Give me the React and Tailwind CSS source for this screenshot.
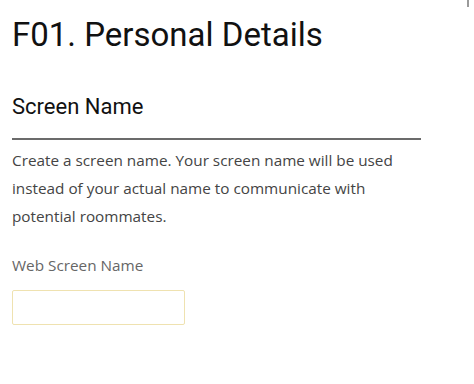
export default function App() {
  return (
    <div className="relative w-[474px] h-[384px] bg-white overflow-hidden">
      <div className="absolute right-[5px] top-0 w-[2px] h-[7px] bg-[#9a9a9a]" />
      <div className="px-3 pt-[13px]">
        <h1 className="text-[33px] leading-[44px] text-[#111] font-['Roboto',sans-serif]">F01. Personal Details</h1>
        <h2 className="mt-[36px] text-[22px] leading-[28px] text-[#111] font-['Roboto',sans-serif]">Screen Name</h2>
        <div className="mt-[17px] w-[409px] h-[2px] bg-[#6b6b6b]" />
        <p className="mt-[6px] w-[409px] text-[15.3px] leading-[28px] text-[#444] font-['Open_Sans',sans-serif]">
          Create a screen name. Your screen name will be used instead of your actual name to communicate with potential roommates.
        </p>
        <label className="block mt-[21px] text-[15.3px] leading-[28px] text-[#666] font-['Open_Sans',sans-serif]">Web Screen Name</label>
        <input className="block mt-[11px] w-[173px] h-[35px] border border-[#efe2b0] rounded-[2px] outline-none" />
      </div>
    </div>
  );
}
